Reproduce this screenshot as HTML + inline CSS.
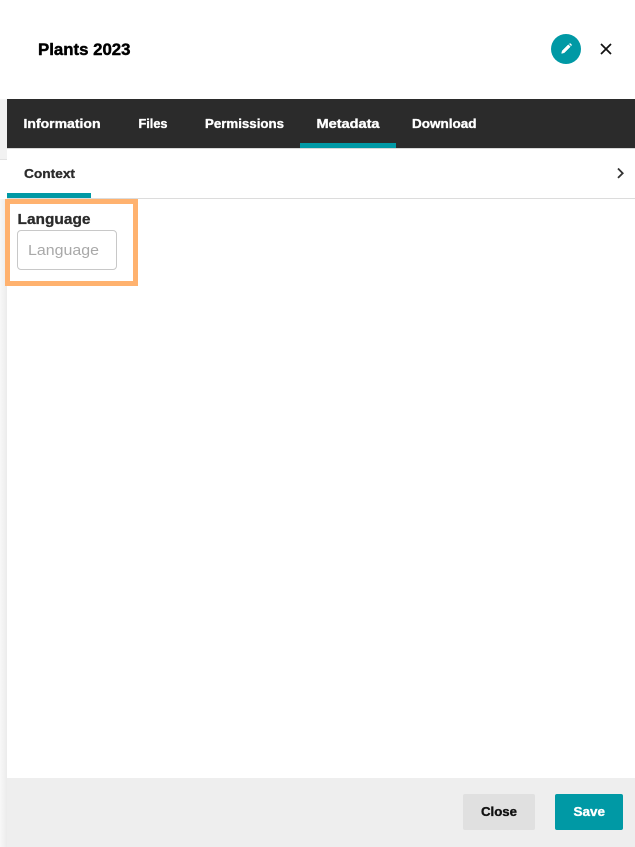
<!DOCTYPE html>
<html>
<head>
<meta charset="utf-8">
<style>
html,body{margin:0;padding:0;background:#fff;width:635px;height:847px;overflow:hidden}
svg{display:block}
text{font-family:"Liberation Sans",sans-serif}
.h{stroke-linejoin:round}
</style>
</head>
<body>
<svg width="635" height="847" viewBox="0 0 635 847" xmlns="http://www.w3.org/2000/svg">
<defs>
<linearGradient id="edge" x1="0" x2="1" y1="0" y2="0">
<stop offset="0" stop-color="#f8f8f8"/>
<stop offset="1" stop-color="#ebebeb"/>
</linearGradient>
</defs>
<rect width="635" height="847" fill="#fff"/>
<!-- left edge -->
<rect x="0" y="99" width="7" height="60" fill="#f2f2f2"/>
<rect x="0" y="159" width="7" height="1" fill="#e2e2e2"/>
<rect x="0" y="199" width="7" height="648" fill="url(#edge)"/>
<!-- header -->
<text class="h" x="38" y="55" font-size="17" font-weight="700" fill="#000" stroke="#000" stroke-width=".45" textLength="92.5" lengthAdjust="spacingAndGlyphs">Plants 2023</text>
<circle cx="566" cy="49" r="15" fill="#0099a5"/>
<path d="M561.6 53.4l.7-2.7 6-6 2 2-6 6z" fill="#fff" stroke="#fff" stroke-width=".5" stroke-linejoin="round"/>
<path d="M569.1 44l.5-.5a.7.7 0 0 1 1 0l1 1a.7.7 0 0 1 0 1l-.5.5z" fill="#fff"/>
<path d="M601 44l10 10M611 44l-10 10" stroke="#111" stroke-width="1.7" fill="none"/>
<!-- tabs -->
<rect x="7" y="99" width="628" height="49" fill="#2b2b2b"/>
<rect x="7" y="148" width="628" height="1" fill="#d8d8d8"/>
<rect x="300" y="143" width="96" height="5" fill="#0099a5"/>
<g class="h" font-size="12.5" font-weight="700" fill="#fff" stroke="#fff" stroke-width=".35">
<text x="23.5" y="128" textLength="77" lengthAdjust="spacingAndGlyphs">Information</text>
<text x="138.5" y="128" textLength="29" lengthAdjust="spacingAndGlyphs">Files</text>
<text x="205" y="128" textLength="79" lengthAdjust="spacingAndGlyphs">Permissions</text>
<text x="316.5" y="128" textLength="63" lengthAdjust="spacingAndGlyphs">Metadata</text>
<text x="412" y="128" textLength="64.5" lengthAdjust="spacingAndGlyphs">Download</text>
</g>
<!-- subtabs -->
<text class="h" x="24" y="178" font-size="12.5" font-weight="700" fill="#2b2b2b" stroke="#2b2b2b" stroke-width=".3" textLength="51" lengthAdjust="spacingAndGlyphs">Context</text>
<rect x="7" y="198" width="628" height="1" fill="#dcdcdc"/>
<rect x="7" y="193" width="84" height="5" fill="#0099a5"/>
<path d="M618 168.5l4.7 4.7-4.7 4.7" stroke="#333" stroke-width="1.8" fill="none"/>
<!-- highlighted field -->
<rect x="7.5" y="201.5" width="128" height="82" fill="#fff" stroke="#ffb26f" stroke-width="5"/>
<text class="h" x="17.5" y="224" font-size="15" font-weight="700" fill="#2b2b2b" stroke="#2b2b2b" stroke-width=".3" textLength="73" lengthAdjust="spacingAndGlyphs">Language</text>
<rect x="17.5" y="230.5" width="99" height="39" rx="3.5" fill="#fff" stroke="#c8c8c8" stroke-width="1"/>
<text x="28" y="255" font-size="15" fill="#a9a9a9" textLength="71" lengthAdjust="spacingAndGlyphs">Language</text>
<!-- footer -->
<rect x="7" y="778" width="628" height="69" fill="#eeeeee"/>
<rect x="463" y="794" width="72" height="36" rx="2" fill="#e0e0e0"/>
<rect x="555" y="794" width="68" height="36" rx="2" fill="#0099a5"/>
<text class="h" x="481" y="816" font-size="12.5" font-weight="700" fill="#111" stroke="#111" stroke-width=".35" textLength="36" lengthAdjust="spacingAndGlyphs">Close</text>
<text class="h" x="573.5" y="816" font-size="12.5" font-weight="700" fill="#fff" stroke="#fff" stroke-width=".35" textLength="31.5" lengthAdjust="spacingAndGlyphs">Save</text>
</svg>
</body>
</html>
